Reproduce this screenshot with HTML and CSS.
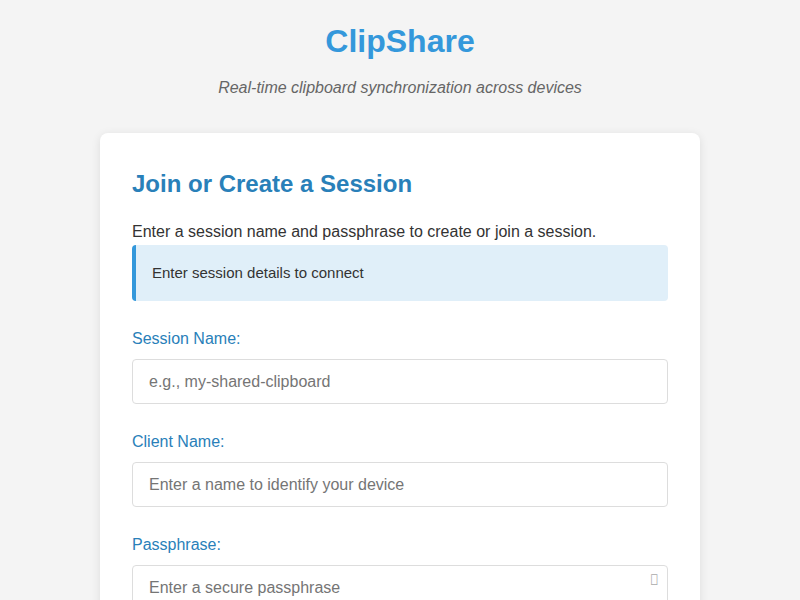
FILE: index.html
```html
<!DOCTYPE html>
<html lang="en">
<head>
<meta charset="utf-8">
<title>ClipShare</title>
<link rel="stylesheet" href="styles.css">
</head>
<body>
<div class="container">
  <header class="header">
    <h1 class="title">ClipShare</h1>
    <p class="subtitle">Real-time clipboard synchronization across devices</p>
  </header>
  <main class="card">
    <h2 class="card-title">Join or Create a Session</h2>
    <p class="intro">Enter a session name and passphrase to create or join a session.</p>
    <div class="status">Enter session details to connect</div>
    <div class="field">
      <label class="label" for="session">Session Name:</label>
      <input class="input" id="session" type="text" placeholder="e.g., my-shared-clipboard">
    </div>
    <div class="field">
      <label class="label" for="client">Client Name:</label>
      <input class="input" id="client" type="text" placeholder="Enter a name to identify your device">
    </div>
    <div class="field">
      <label class="label" for="pass">Passphrase:</label>
      <div class="pass-wrap">
        <input class="input" id="pass" type="password" placeholder="Enter a secure passphrase">
        <span class="eye">&#xf06e;</span>
      </div>
    </div>
  </main>
</div>
</body>
</html>
```
FILE: styles.css
```css
* { box-sizing: border-box; }
body {
  margin: 0;
  background: #f4f4f4;
  font-family: "Liberation Sans", Arial, sans-serif;
  color: #333;
}
.container {
  max-width: 600px;
  margin: 0 auto;
  padding: 23px 0 0;
}
.header {
  text-align: center;
  margin-bottom: 36px;
}
.title {
  margin: 0;
  font-size: 32px;
  line-height: 37px;
  color: #3498db;
  font-weight: bold;
}
.subtitle {
  margin: 19px 0 0;
  font-size: 16px;
  line-height: 18px;
  font-style: italic;
  color: #666;
}
.card {
  background: #fff;
  border-radius: 8px;
  box-shadow: 0 2px 10px rgba(0,0,0,0.1);
  padding: 37px 32px 32px;
}
.card-title {
  margin: 0 0 25px;
  font-size: 24px;
  line-height: 28px;
  color: #2980b9;
}
.intro {
  margin: 0 0 4px;
  font-size: 16px;
  line-height: 18px;
}
.status {
  background: #e0eff9;
  border-left: 4px solid #3498db;
  border-radius: 4px;
  padding: 19px 16px;
  font-size: 15px;
  line-height: 18px;
  color: #333;
  margin-bottom: 29px;
}
.field {
  margin-bottom: 29px;
}
.label {
  display: block;
  color: #2980b9;
  font-size: 16px;
  line-height: 18px;
  margin-bottom: 11px;
}
.input {
  display: block;
  width: 100%;
  height: 45px;
  padding: 12px 16px;
  border: 1px solid #ddd;
  border-radius: 4px;
  font-family: "Liberation Sans", Arial, sans-serif;
  font-size: 16px;
  color: #333;
  background: #fff;
}
.input::placeholder { color: #757575; }
.pass-wrap { position: relative; }
.eye {
  position: absolute;
  right: 10px;
  top: 7px;
  font-size: 12px;
  color: #aaa;
  font-family: "DejaVu Sans", sans-serif;
}
```
